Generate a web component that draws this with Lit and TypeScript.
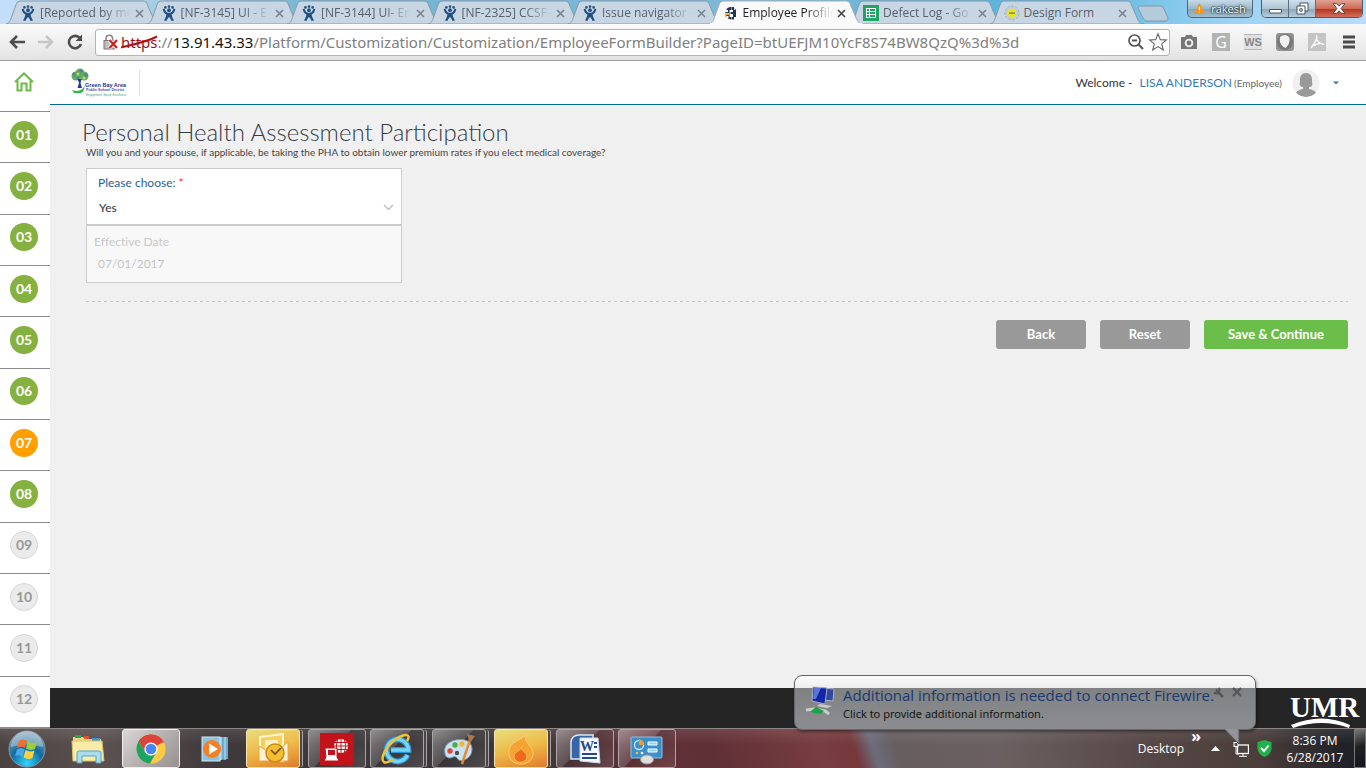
import { LitElement, html, svg, css } from "lit";
import { customElement, property } from "lit/decorators.js";
import { classMap } from "lit/directives/class-map.js";

const favicons: Record<string, unknown> = {
  jira: svg`<g fill="#205081"><circle cx="8" cy="1.6" r="1.3"/><circle cx="4.4" cy="2.4" r="1.3"/><circle cx="11.6" cy="2.4" r="1.3"/><circle cx="8" cy="5.2" r="1.9"/><path d="M1.6 4.2 3.4 3.4C4.4 6.6 6 7.8 8 7.8S11.6 6.6 12.6 3.4L14.4 4.2C13.6 7 12.3 8.7 10.6 9.6 10.8 11.8 11.8 13.8 13 15.4L10.6 16C10 14.4 9 12.8 8 12 7 12.8 6 14.4 5.4 16L3 15.4C4.2 13.8 5.2 11.8 5.4 9.6 3.7 8.7 2.4 7 1.6 4.2Z"/></g>`,
  profile: svg`<path d="M7 2A6 6 0 0 0 3 5H5V7H2.300V8H6V10H3V11H5.500V13H4.500Q6 14.300 8 14.500V12H6.500V5H8V2Z" fill="#1d3658"/><path d="M2 8.500H6V10H3.500V12.500H2.500Z" fill="#f0a020"/><path d="M8.500 2H11V5H13V12H11V14.500H8.500V12H10V9H7.500V7H10V5H8.500Z" fill="#1d3658"/><path d="M11.500 3l2 2h-2Z" fill="#49a88a"/>`,
  sheet: svg`<rect width="16" height="16" fill="#21a366"/><rect x="3" y="3" width="10" height="10" fill="#fff"/><path d="M4 4h2v2H4ZM7 4h5v2H7ZM4 7h2v2H4ZM7 7h5v2H7ZM4 10h2v2H4ZM7 10h5v2H7Z" fill="#21a366"/>`,
  design: svg`<circle cx="8" cy="8" r="7" fill="none" stroke="#a6aeb4" stroke-dasharray="3 1"/><circle cx="8" cy="8" r="5.4" fill="none" stroke="#c4c8b0"/><circle cx="8" cy="8" r="4.2" fill="#e6e41c"/><path d="M5 7.3h6v1.6H5Z" fill="#8d8a49"/>`,
};

interface TabInfo { title: string; icon: string; active?: boolean }
const tabs: TabInfo[] = [
  { title: "[Reported by me", icon: "jira" },
  { title: "[NF-3145] UI - E", icon: "jira" },
  { title: "[NF-3144] UI- Er", icon: "jira" },
  { title: "[NF-2325] CCSF-", icon: "jira" },
  { title: "Issue navigator -", icon: "jira" },
  { title: "Employee Profile", icon: "profile", active: true },
  { title: "Defect Log - Go", icon: "sheet" },
  { title: "Design Form", icon: "design" },
];

@customElement("browser-tab")
class BrowserTab extends LitElement {
  @property({ attribute: false }) info!: TabInfo;
  static styles = css`
    :host { display: block; flex: 1; min-width: 0; height: 24px; position: relative; }
    .shape { position: absolute; left: 0; top: 0; width: calc(100% + 14px); height: 24px; }
    .tab { position: relative; display: flex; align-items: center; box-sizing: border-box; height: 24px; width: 100%; padding: 2px 3px 0 14px; gap: 4px;
      border: 0; background: none; color: #56616c; font: 12px/20px "Open Sans", sans-serif; text-align: left; }
    .active { color: #222; }
    .icon { width: 16px; height: 16px; flex: none; }
    .title { flex: 1; min-width: 0; overflow: hidden; white-space: nowrap; mask-image: linear-gradient(90deg, #000 70%, transparent); }
    .full { mask-image: none; }
    .close { width: 9px; height: 9px; flex: none; }
  `;
  render() {
    const a = !!this.info.active;
    return html`
      <svg class="shape" viewBox="0 0 155 24" preserveAspectRatio="none">
        <path d="M0 24C4 23 4 21 6 16L10 5C11 2 12 1 15 1H137C140 1 141 2 142 5L148 19C150 23 151 24 155 24Z" fill=${a ? "#fafafa" : "#c8d6e3"} stroke=${a ? "#a4afb8" : "#8799a9"}></path>
        ${a ? svg`<path d="M1 24H154" stroke="#fafafa" stroke-width="2"/>` : ""}
      </svg>
      <button class=${classMap({ tab: true, active: a })}>
        <svg class="icon" viewBox="0 0 16 16">${favicons[this.info.icon]}</svg>
        <span class=${classMap({ title: true, full: this.info.icon === "design" })}>${this.info.title}</span>
        <svg class="close" viewBox="0 0 9 9"><path d="M1 1 8 8M8 1 1 8" stroke=${a ? "#444" : "#78828c"} stroke-width="1.6"/></svg>
      </button>`;
  }
}

@customElement("browser-chrome")
class BrowserChrome extends LitElement {
  static styles = css`
    :host { display: block; font-family: "Open Sans", sans-serif; }
    .strip { display: flex; align-items: flex-start; height: 24px; padding-left: 6px; background: linear-gradient(90deg, #c3defa 0, #abcfe8 10%, #72b4d1 24%, #7db9d8 55%, #68b4d8 66%, #58b4dc 78%, #9dd2f2 90%, #b9dcfa); }
    .tabs { display: flex; flex: 0 1 1124px; min-width: 0; }
    .on { z-index: 1; }
    .newtab { width: 32px; height: 17px; margin: 5px 0 0 7px; padding: 0; border: 0; background: none; }
    .newtab svg { display: block; }
    .grow { flex: 1; }
    .user { display: flex; align-items: center; justify-content: center; gap: 6px; height: 18px; width: 66px; padding: 0; margin-right: 8px; border: 1px solid #526779; border-top: 0; border-radius: 0 0 5px 5px; background: linear-gradient(#c7dbe9, #9db6c7 50%, #86a2b6 51%, #a2bccd); color: #fff; font: 11px/14px "Open Sans", sans-serif; text-shadow: 0 0 2px #000, 0 0 2px #000; }
    .win { display: flex; margin-right: 3px; border: 1px solid #4c5a68; border-top: 0; border-radius: 0 0 5px 5px; overflow: hidden; }
    .win button { display: grid; place-items: center; height: 17px; width: 27px; padding: 0; border: 0; border-right: 1px solid #5d6f7e; background: linear-gradient(#d0e0ec, #afc4d4 50%, #8ca5b8 51%, #b7cddc); }
    .win .shut { width: 46px; border: 0; background: linear-gradient(#e0a193, #cf6a55 50%, #b5301b 51%, #d1705a); }
    .bar { display: flex; align-items: center; height: 36px; border-bottom: 1px solid #a0a0a0; background: linear-gradient(#fafafa, #e3e3e3); padding: 0 7px 0 8px; }
    .nav { width: 18px; height: 18px; padding: 0; border: 0; background: none; margin-right: 11px; }
    .nav svg, .ext svg, .omni svg { display: block; }
    .omni { display: flex; align-items: center; flex: 1; min-width: 0; height: 25px; border: 1px solid #b4b4b4; border-radius: 3px; background: #fff; padding: 0 1px 0 7px; }
    .url { position: relative; flex: 1; min-width: 0; margin-left: 3px; }
    .address { display: block; white-space: nowrap; overflow: hidden; font: 15px/24px "Noto Sans", sans-serif; color: #808080; }
    .bad { color: #a01216; position: relative; }
    .strike { position: absolute; left: 0; top: 5px; width: 37px; height: 14px; }
    .host { color: #111; }
    .tool { width: 20px; height: 20px; padding: 0; border: 0; background: none; margin-left: 2px; }
    .ext { display: flex; align-items: center; gap: 12px; padding-left: 9px; }
    .ext button { width: 20px; height: 20px; padding: 0; border: 0; background: none; }
  `;
  render() {
    return html`
      <div class="strip">
        <div class="tabs">${tabs.map((t) => html`<browser-tab class=${t.active ? "on" : ""} .info=${t}></browser-tab>`)}</div>
        <button class="newtab" aria-label="New tab"><svg width="32" height="17" viewBox="0 0 32 17"><path d="M1 3C1 1 2 1 4 1H23C25 1 26 2 27 4L31 13C31 15 30 16 28 16H10C8 16 7 15 6 13Z" fill="#b4cbdc" stroke="#8298a8"/></svg></button>
        <span class="grow"></span>
        <button class="user"><svg width="11" height="11" viewBox="0 0 11 11"><path d="M5.5 0 11 11H0Z" fill="#f6960f"/><path d="M5.5 4v3.4M5.5 8.4v1.2" stroke="#fff" stroke-width="1.2"/></svg>rakesh</button>
        <div class="win">
          <button aria-label="Minimize"><svg width="13" height="11" viewBox="0 0 13 11"><rect x=".5" y="6.5" width="12" height="3.5" rx=".5" fill="#fff" stroke="#47525e"/></svg></button>
          <button aria-label="Restore"><svg width="13" height="13" viewBox="0 0 13 13"><path d="M4 1H12V9H9V12H1V4H4Z" fill="#fff" stroke="#47525e"/><path d="M4 4H9V9M3.8 6.8h2.4v2.4H3.8Z" fill="none" stroke="#47525e"/></svg></button>
          <button class="shut" aria-label="Close"><svg width="14" height="11" viewBox="0 0 14 11"><path d="M1 .7H4.5L7 3.2 9.5.7H13L9 5.5 13 10.3H9.5L7 7.8 4.5 10.3H1L5 5.5Z" fill="#fff" stroke="#4d3a3e" stroke-width=".9"/></svg></button>
        </div>
      </div>
      <div class="bar">
        <button class="nav" aria-label="Back"><svg width="18" height="18" viewBox="0 0 18 18"><path d="M17 9H4M9 3 3 9 9 15" fill="none" stroke="#4d4d4d" stroke-width="2.6"/></svg></button>
        <button class="nav" aria-label="Forward"><svg width="18" height="18" viewBox="0 0 18 18"><path d="M1 9H14M9 3 15 9 9 15" fill="none" stroke="#c6c6c6" stroke-width="2.6"/></svg></button>
        <button class="nav" aria-label="Reload"><svg width="18" height="18" viewBox="0 0 18 18"><path d="M14 5.2A6.2 6.2 0 1 0 15 11" fill="none" stroke="#4d4d4d" stroke-width="2.6"/><path d="M16 1.5V8H9.5Z" fill="#4d4d4d"/></svg></button>
        <div class="omni">
          <svg width="15" height="16" viewBox="0 0 15 16"><path d="M3 7V4.5a3.3 3.3 0 0 1 6.6 0V7" fill="none" stroke="#8b8b8b" stroke-width="1.6"/><rect x="1" y="6.5" width="10.5" height="8.5" fill="#bdbdbd" stroke="#777"/><path d="M6.2 6 14 14M14 6 6.2 14" stroke="#fff" stroke-width="4"/><path d="M6.5 6 14 14M14 6 6.5 14" stroke="#cf1f1b" stroke-width="2.2"/></svg>
          <div class="url">
            <span class="address"><span class="bad">https</span>://<span class="host">13.91.43.33</span>/Platform/Customization/Customization/EmployeeFormBuilder?PageID=btUEFJM10YcF8S74BW8QzQ%3d%3d</span>
            <svg class="strike" viewBox="0 0 37 14"><path d="M0 12.5C10 10 26 7 36 1.5" stroke="#b01015" stroke-width="2" fill="none"/></svg>
          </div>
          <button class="tool" aria-label="Zoom"><svg width="20" height="20" viewBox="0 0 20 20"><circle cx="8.5" cy="8.5" r="5.5" fill="none" stroke="#555" stroke-width="1.7"/><path d="M6 8.5h5M12.5 12.5 17 17" stroke="#555" stroke-width="2"/></svg></button>
          <button class="tool" aria-label="Bookmark"><svg width="20" height="20" viewBox="0 0 20 20"><path d="M10 1.8 12.3 7.6 18.4 8 13.7 11.9 15.3 18 10 14.6 4.7 18 6.3 11.9 1.6 8 7.7 7.6Z" fill="#fff" stroke="#666" stroke-width="1.1"/></svg></button>
        </div>
        <div class="ext">
          <button aria-label="Screenshot"><svg width="20" height="20" viewBox="0 0 20 20"><path d="M2 5H6L7 3H13L14 5H18V17H2Z" fill="#777"/><circle cx="10" cy="11" r="4.3" fill="#eee"/><circle cx="10" cy="11" r="2.4" fill="#777"/></svg></button>
          <button aria-label="G"><svg width="20" height="20" viewBox="0 0 20 20"><rect x="1" y="1" width="18" height="18" fill="#b3b3b3"/><text x="10" y="16" text-anchor="middle" font-family="Open Sans" font-size="16" fill="#fff">G</text></svg></button>
          <button aria-label="WS"><svg width="20" height="20" viewBox="0 0 20 20"><rect x="1" y="2" width="18" height="15" fill="#e0e0e0"/><path d="M1 2.5H19M1 17.5H19" stroke="#b8b8b8"/><text x="10" y="14" text-anchor="middle" font-family="Liberation Sans" font-weight="bold" font-size="11" fill="#888">WS</text></svg></button>
          <button aria-label="Shield"><svg width="20" height="20" viewBox="0 0 20 20"><rect x="1" y="1" width="18" height="18" rx="3" fill="#929292"/><circle cx="10" cy="10" r="8" fill="#777"/><path d="M5 5Q10 1 14.5 5.5C15 11 13 14 10.5 16 6 14 4 10 5 5Z" fill="#f0f0f0"/></svg></button>
          <button aria-label="PDF"><svg width="20" height="20" viewBox="0 0 20 20"><rect x="1" y="1" width="18" height="18" fill="#c4c4c4"/><path d="M9 4C11 3 10 9 4 16M9.5 4C9 9 13 12 17 12.5C14 10.5 8 12 4 15" fill="none" stroke="#fff" stroke-width="1.3"/></svg></button>
          <button aria-label="Menu"><svg width="20" height="20" viewBox="0 0 20 20"><path d="M4 5H16M4 10H16M4 15H16" stroke="#4a4a4a" stroke-width="2.8"/></svg></button>
        </div>
      </div>`;
  }
}

@customElement("desktop-taskbar")
class DesktopTaskbar extends LitElement {
  static styles = css`
    :host { display: flex; align-items: stretch; height: 40px; box-sizing: border-box; border-top: 1px solid #8c8785;
      background: linear-gradient(180deg, #ffffff18, #0000 40%), linear-gradient(72deg, #4b4140 0, #5b5150 8%, #40393b 16%, #3b373a 38%, #603238 47%, #5f3036 52%, #783d41 60%, #75383b 62.4%, #6d6c7b 63.8%, #675e60 65.4%, #6b5f60 73%, #544745 84%, #493c39 92%, #202229 98%);
      color: #fff; font: 12px/17px "Open Sans", sans-serif; }
    .apps { display: flex; align-items: stretch; flex: 1; }
    button { padding: 0; border: 0; background: none; color: inherit; font: inherit; display: grid; place-items: center; }
    svg { display: block; }
    .start { width: 54px; }
    .plain { width: 62px; }
    .first { width: 68px; }
    .task { box-sizing: border-box; border: 1px solid #a9a6a7; border-radius: 3px; background: linear-gradient(135deg, #ffffff60, #ffffff20 45%, #00000010 46%, #ffffff18); margin-right: 4px; width: 58px; }
    .task.stack { width: 54px; margin-right: 8px; box-shadow: 3px 0 0 -1px #4a4546, 4px 0 0 -1px #a9a6a7; }
    .task.hot { background: linear-gradient(165deg, #e9dd7c, #eeb948 50%, #e07a2c); border-color: #f5e7b4; }
    .task.lit { background: linear-gradient(135deg, #dad7d6, #b5b1b1 50%, #96908f); border-color: #eee; }
    .tray { display: flex; align-items: center; }
    .desk { margin-right: 7px; }
    .more { align-self: flex-start; font: bold 16px/14px "Open Sans", sans-serif; margin-right: 10px; }
    .icons { display: flex; align-items: center; gap: 8px; margin-right: 8px; }
    .up { margin-right: 5px; }
    .clock { width: 70px; text-align: center; display: block; margin-right: 4px; white-space: nowrap; }
    .peek { width: 12px; align-self: stretch; border: 1px solid #777; background: linear-gradient(160deg, #777, #1e2026 45%, #15171c); }
  `;
  render() {
    return html`
      <div class="apps">
        <button class="start" aria-label="Start"><svg width="38" height="38" viewBox="0 0 38 38"><defs><radialGradient id="orb" cy=".9" r=".9"><stop stop-color="#30d7ff"/><stop offset=".5" stop-color="#126aa2"/><stop offset="1" stop-color="#8fa9b9"/></radialGradient></defs><circle cx="19" cy="19" r="18" fill="url(#orb)" stroke="#8797a1"/><path d="M3 17A16 16 0 0 1 35 17Q18 12 3 17" fill="#fff5"/><path d="M11 11Q15 8 19 11L17 18Q13 15.500 9 18Z" fill="#f26d2e"/><path d="M20 11.500Q24 14 29 12L27 19Q22 21 18 18.500Z" fill="#9bcf3a"/><path d="M9 19.500Q13 17 16.500 19.500L14.500 27Q11 24 7 26Z" fill="#49a9e6"/><path d="M17.500 20Q22 22.500 26.500 20.500L24.500 28Q20 30 15.500 27.500Z" fill="#ffd23c"/></svg></button>
        <button class="first" aria-label="Explorer"><svg width="34" height="32" viewBox="0 0 34 32"><path d="M2 4H12L14 6H30V26H2Z" fill="#e9d684"/><path d="M4 2H10V5H4Z" fill="#28a745"/><path d="M13 3H18V6H13Z" fill="#e05334"/><path d="M21 5H29V8H21Z" fill="#3c94d6"/><path d="M1 8H31L33 28H2Z" fill="#f8eca8" stroke="#d8c46a"/><path d="M6 30V20Q6 18 8 18H28Q30 18 30 20V30H25V23H11V30Z" fill="#a9dcf0" stroke="#5aa4c7"/></svg></button>
        <button class="task lit" aria-label="Chrome"><svg width="30" height="30" viewBox="0 0 30 30"><circle cx="15" cy="15" r="14.500" fill="#fc4"/><path d="M15 15 2.400 7.800A14.500 14.500 0 0 1 27.600 7.800Z" fill="#db4437"/><path d="M15 8.500H28L27.400 7.400A14.500 14.500 0 0 0 2.500 7.600L9.400 18Z" fill="#db4437"/><path d="M2.500 7.600A14.500 14.500 0 0 0 14 29.500L20.600 18 15 21.500 9.400 18Z" fill="#1da462"/><circle cx="15" cy="15" r="6.600" fill="#fff"/><circle cx="15" cy="15" r="5.300" fill="#4687f4"/></svg></button>
        <button class="plain" aria-label="Media player"><svg width="28" height="28" viewBox="0 0 28 28"><path d="M13 2H27V24L13 26Z" fill="#6cadcf"/><path d="M20 2V25M24 2V25" stroke="#bce4f4"/><rect x="1" y="2" width="18" height="24" fill="#8dc3df" stroke="#d1eaf5"/><circle cx="11" cy="14" r="9" fill="#f47f25"/><path d="M8 8.500 17 14 8 19.500Z" fill="#fff"/></svg></button>
        <button class="task hot stack" aria-label="Outlook"><svg width="32" height="32" viewBox="0 0 32 32"><path d="M3 4 26 1V28L3 25Z" fill="#f7cf5a" stroke="#fff7cf" stroke-width="2"/><path d="M8 7H21V13L15 19H8Z" fill="#fff2be"/><path d="M2 13 16 22 31 9V28H2Z" fill="#fff1d5" stroke="#e5a640"/><circle cx="18" cy="20" r="9" fill="#f3be36" stroke="#c98a12" stroke-width="1.500"/><path d="M14 17 18 21 24 15" fill="none" stroke="#7b4d0a" stroke-width="1.600"/></svg></button>
        <button class="task" aria-label="Remote network"><svg width="34" height="32" viewBox="0 0 34 32"><rect width="34" height="32" fill="#c2121a"/><circle cx="21" cy="13" r="7" fill="#fff"/><path d="M14 13H28M21 6V20M15 9.500H27M15 16.500H27M17.500 7Q15 13 17.500 19M24.500 7Q27 13 24.500 19" stroke="#c2121a" fill="none"/><path d="M5 15H17V24L19 28H4L6 24Z" fill="#fff" stroke="#c2121a"/><rect x="8" y="17" width="7" height="5" fill="#c2121a"/></svg></button>
        <button class="task stack" aria-label="Internet Explorer"><svg width="32" height="32" viewBox="0 0 32 32"><path d="M26.500 22A11 11 0 1 1 27.500 17H10" fill="none" stroke="#2f93d4" stroke-width="6"/><path d="M26.500 22A11 11 0 1 1 27.500 17H10" fill="none" stroke="#75d4f7" stroke-width="3.500"/><path d="M26 8C31 0 23 1 15 6 4 14-1 26 3 29 5 31 9 28 12 26" fill="none" stroke="#f3c42c" stroke-width="2.500"/></svg></button>
        <button class="task stack" aria-label="Paint"><svg width="34" height="32" viewBox="0 0 34 32"><path d="M3 21C0 9 14 5 23 7 33 10 32 24 22 27 14 30 17 22 11 24 7 26 4 25 3 21Z" fill="#c8e2f2" stroke="#7499b7"/><circle cx="8" cy="18" r="2.700" fill="#de4937"/><circle cx="13" cy="12" r="2.700" fill="#55a93f"/><circle cx="20" cy="11" r="2.700" fill="#f2b731"/><circle cx="15" cy="20" r="2.200" fill="#534d55"/><path d="M29 4 20 31" stroke="#e68a34" stroke-width="2.500"/><path d="M25 1 33 3 28 10Z" fill="#a47750"/></svg></button>
        <button class="task hot stack" aria-label="Flame"><svg width="28" height="34" viewBox="0 0 28 34"><path d="M21 1C13 10 27 13 26 23 24 35 4 35 2 23 0 9 15 9 21 1Z" fill="#f5a434" stroke="#ffcd70"/><path d="M15 14C12 19 20 19 20 25 19 32 8 32 7 25 7 19 14 20 15 14Z" fill="#ee6a1c" stroke="#ffb752"/></svg></button>
        <button class="task" aria-label="Word"><svg width="32" height="32" viewBox="0 0 32 32"><path d="M2 9Q3 2 10 2H24V26H2Z" fill="#3665a9" stroke="#d7e6f5" stroke-width="1.500"/><path d="M11 5H29L31 30 11 28Z" fill="#f5f8fd" stroke="#ccd8e9"/><text x="11" y="18" font-family="Liberation Serif" font-weight="bold" font-size="14" fill="#244886">W</text><path d="M25 10H28M25 14H28M13 21H28M13 25H28" stroke="#244886" stroke-width="2"/></svg></button>
        <button class="task" aria-label="Control panel"><svg width="34" height="32" viewBox="0 0 34 32"><rect x="1" y="4" width="31" height="21" rx="1" fill="#3d8fca" stroke="#8cc3e6"/><circle cx="9" cy="12" r="4.500" fill="none" stroke="#c9e9fa" stroke-width="1.300"/><path d="M9 12V6A6 6 0 0 1 14 12Z" fill="#f49a2c"/><path d="M18 9H27V12H18ZM18 16H27V19H18Z" fill="#8ed5f5" stroke="#fff"/><circle cx="7" cy="20" r="1.300" fill="#f8b745"/><circle cx="12" cy="20" r="1.300" fill="#fff"/><ellipse cx="17" cy="26.500" rx="6.500" ry="4.500" fill="#dedede" stroke="#999"/></svg></button>
      </div>
      <div class="tray">
        <span class="desk">Desktop</span>
        <span class="more">»</span>
        <div class="icons">
          <svg class="up" width="9" height="6" viewBox="0 0 9 6"><path d="M4.500 0 9 5H0Z" fill="#fff"/></svg>
          <svg width="16" height="16" viewBox="0 0 16 16"><rect x="4.500" y="4" width="11" height="8.500" fill="#4a4240" stroke="#fff" stroke-width="1.300"/><path d="M10 13V15M6 15.300H14M3 6V13H6" fill="none" stroke="#fff"/><rect x="1" y="1.500" width="4" height="4" fill="#555" stroke="#fff"/></svg>
          <svg width="15" height="17" viewBox="0 0 15 17"><path d="M7.500 0 14.500 2V9Q14 14 7.500 17 1 14 .5 9V2Z" fill="#22b04c"/><path d="M4 8 7 11 11.500 5.500" fill="none" stroke="#fff" stroke-width="1.900"/></svg>
        </div>
        <button class="clock"><div>8:36 PM</div><div>6/28/2017</div></button>
        <button class="peek" aria-label="Show desktop"></button>
      </div>`;
  }
}

@customElement("app-root")
class AppRoot extends LitElement {
  static styles = css`
    :host { display: flex; flex-direction: column; height: 100vh; overflow: hidden; font-family: Lato, sans-serif; font-variant-ligatures: none; color: #333; position: relative; }
    .page { display: flex; flex: 1; min-height: 0; background: #fff; }
    .side { display: flex; flex-direction: column; flex: none; width: 50px; }
    .home { display: grid; place-items: center; height: 51px; box-sizing: border-box; padding: 0 2px 9px 0; border-bottom: 1px solid #8c8c8c; }
    .home svg { display: block; }
    .steps { display: flex; flex-direction: column; flex: 1; margin: 0; padding: 0; list-style: none; }
    .step { flex: 1; box-sizing: border-box; border-bottom: 1px solid #8c8c8c; padding: 0 2px 5px 0; display: grid; place-items: center; }
    .dot { width: 28px; height: 28px; box-sizing: border-box; border-radius: 50%; background: #84b140; color: #fff; font: bold 14px/28px Lato, sans-serif; text-align: center; text-decoration: none; }
    .now { background: #ffa000; }
    .todo { background: #ebebeb; color: #999; border: 1px solid #d6d6d6; line-height: 26px; }
    .body { display: flex; flex-direction: column; flex: 1; min-width: 0; }
    .head { display: flex; align-items: center; height: 43px; border-bottom: 1px solid #006a9c; padding: 0 26px 0 20px; font-size: 12px; flex: none; }
    .logo { width: 60px; height: 30px; }
    .rule { width: 1px; height: 26px; background: #ddd; margin-left: 9px; }
    .grow { flex: 1; }
    .name { color: #337ab7; text-decoration: none; margin: 0 2px 0 7px; }
    .role { font-size: 10px; color: #666; margin-right: 10px; }
    .avatar { width: 28px; height: 28px; margin-right: 12px; }
    .menu { padding: 0; border: 0; background: none; width: 8px; height: 16px; display: grid; place-items: center; }
    .main { flex: 1; background: #f0f0f0; padding: 12px 18px 0 36px; min-height: 0; }
    h1 { margin: 0 0 0 -4px; font: 300 24px/30px Lato, sans-serif; color: #333b47; }
    .lead { margin: 0 0 10px; font-size: 10px; line-height: 11px; color: #444; }
    .fields { width: 316px; max-width: 100%; }
    .field { box-sizing: border-box; height: 57px; border: 1px solid #ccc; background: #fff; padding: 6px 6px 0 11px; font-size: 12px; line-height: 16px; }
    .field label { display: block; color: #1f6292; }
    .req { color: #f22; }
    .pick { position: relative; margin-top: 8px; }
    select { appearance: none; display: block; width: 100%; border: 0; padding: 0 0 0 1px; margin: 0; background: none; font: 12px/18px Lato, sans-serif; color: #333; height: 18px; }
    .chev { position: absolute; right: 1px; top: 5px; pointer-events: none; }
    .off { background: #f8f8f8; height: 58px; padding: 8px 6px 0 7px; }
    .off label { color: #c8c8c8; }
    .off input { display: block; width: 100%; box-sizing: border-box; border: 0; padding: 0 0 0 4px; margin-top: 5px; height: 18px; background: none; color: #c4c4c4; font: 12px/18px Lato, sans-serif; }
    .dash { height: 1px; margin: 18px 0 18px; background: repeating-linear-gradient(90deg, #c6c6c6 0 3px, transparent 3px 6px); }
    .actions { display: flex; justify-content: flex-end; gap: 14px; }
    .btn { width: 90px; height: 29px; border: 0; border-radius: 3px; padding: 0; background: #999; color: #fff; font: bold 13px/29px Lato, sans-serif; }
    .save { width: 144px; background: #6cbe4a; }
    .foot { flex: none; height: 40px; background: #252525; display: flex; justify-content: flex-end; align-items: flex-start; padding: 0 6px 0 0; }
    .toast { position: absolute; right: 110px; bottom: 38px; box-sizing: border-box; width: 462px; height: 55px; border: 1px solid #666; border-radius: 8px; background: linear-gradient(#fbfbfb, #eee 12px, #808183 12px, #8b8d90); display: flex; padding: 9px 13px 0 10px; gap: 4px; box-shadow: 1px 2px 3px #0006; font-family: "Open Sans", sans-serif; }
    .pc { width: 34px; height: 34px; flex: none; }
    .note { flex: 1; min-width: 0; white-space: nowrap; }
    .note strong { display: block; font: 15px/21px "Open Sans", sans-serif; color: #193a72; }
    .note span { display: block; font: 11px/16px "Noto Sans", sans-serif; color: #151515; }
    .ctl { display: flex; gap: 8px; margin-top: 1px; }
    .ctl button { padding: 0; border: 0; background: none; height: 12px; }
    .ctl svg { display: block; }
    .tip { position: absolute; right: 15px; top: 53px; }
  `;
  render() {
    const steps = Array.from({ length: 12 }, (_, i) => i + 1);
    return html`
      <browser-chrome></browser-chrome>
      <div class="page">
        <nav class="side">
          <a class="home" href="#" aria-label="Home"><svg width="20" height="20" viewBox="0 0 20 20"><path d="M1 10 10 1.500 19 10M3.500 8.500V18.500H7.500V11.500H12.500V18.500H16.500V8.500" fill="none" stroke="#6cbb45" stroke-width="2"/></svg></a>
          <ol class="steps">${steps.map((n) => html`<li class="step"><a href="#" class=${classMap({ dot: true, now: n === 7, todo: n > 8 })}>${String(n).padStart(2, "0")}</a></li>`)}</ol>
        </nav>
        <div class="body">
          <header class="head">
            <svg class="logo" viewBox="0 0 60 30"><g fill="#67a855"><circle cx="6" cy="8" r="4.500"/><circle cx="14" cy="8" r="4.500"/><circle cx="10" cy="5" r="4.500"/></g><g fill="#3f86b0"><circle cx="4" cy="6" r="1.600"/><circle cx="11" cy="3" r="1.600"/><circle cx="16" cy="7" r="1.700"/><circle cx="8" cy="10" r="1.600"/></g><g fill="#b4d97a"><circle cx="8" cy="6" r="1.500"/><circle cx="14" cy="10" r="1.500"/></g><path d="M7.500 11H11.500L10.500 15 12 20H7.500L9 15Z" fill="#2a3a8c"/><path d="M2 22Q11 25 14.500 18 15 27 4 25Z" fill="#35b44a"/><text x="15" y="18.500" font-family="Liberation Sans" font-weight="bold" font-size="5.500" fill="#2d3480">Green Bay Area</text><text x="16" y="23" font-family="Liberation Sans" font-weight="bold" font-size="3.700" fill="#4a4b9a">Public School District</text><text x="16" y="27.500" font-family="Liberation Sans" font-size="2.800" fill="#449a83">Engagement. Equity. Excellence.</text></svg>
            <span class="rule"></span>
            <span class="grow"></span>
            <span>Welcome -</span><a class="name" href="#">LISA ANDERSON</a><span class="role">(Employee)</span>
            <svg class="avatar" viewBox="0 0 28 28"><circle cx="14" cy="14" r="13.500" fill="#f0f0f0"/><path d="M14 4C19 4 20.500 8 20 13 21 16 20 18 17 18V20Q22 21 24 23.500A13.500 13.500 0 0 1 4 23.500Q6 21 11 20V18C8 18 7 16 8 13 7.500 8 9 4 14 4Z" fill="#999"/></svg>
            <button class="menu" aria-label="Account menu"><svg width="6" height="4" viewBox="0 0 6 4"><path d="M0 .5H6L3 3.500Z" fill="#337ab7"/></svg></button>
          </header>
          <main class="main">
            <h1>Personal Health Assessment Participation</h1>
            <p class="lead">Will you and your spouse, if applicable, be taking the PHA to obtain lower premium rates if you elect medical coverage?</p>
            <div class="fields">
              <div class="field">
                <label for="choice">Please choose: <span class="req">*</span></label>
                <div class="pick"><select id="choice"><option>Yes</option><option>No</option></select>
                  <svg class="chev" width="11" height="7" viewBox="0 0 11 7"><path d="M1 1 5.500 5.500 10 1" fill="none" stroke="#b8b8b8" stroke-width="1.200"/></svg></div>
              </div>
              <div class="field off">
                <label for="date">Effective Date</label>
                <input id="date" value="07/01/2017" disabled />
              </div>
            </div>
            <div class="dash"></div>
            <div class="actions">
              <button class="btn">Back</button><button class="btn">Reset</button><button class="btn save">Save &amp; Continue</button>
            </div>
          </main>
          <footer class="foot"><svg width="70" height="40" viewBox="0 0 70 40"><text x="0" y="29" font-family="Liberation Serif" font-weight="bold" font-size="29" fill="#fff">UMR</text><path d="M1 37Q32 24 60 37L59 40Q32 30 3 40Z" fill="#fff"/></svg></footer>
        </div>
      </div>
      <desktop-taskbar></desktop-taskbar>
      <aside class="toast">
        <svg class="pc" viewBox="0 0 34 34"><path d="M17 3 29 4 28 16 18 15Z" fill="#3348a0" stroke="#aab3c8"/><path d="M8 2 22 3 20 19 7 16Z" fill="#1525a8" stroke="#a6b0c8"/><path d="M9 3 16 3 11 14 8 14Z" fill="#5f74d8"/><path d="M15 19 27 21 22 23 12 21Z" fill="#ccc"/><path d="M1 25 9 24 20 26 24 29" stroke="#c8cfc9" stroke-width="3" fill="none"/><path d="M6 26 11 22 19 26 16 29 8 28Z" fill="#1ea04a"/></svg>
        <div class="note"><strong>Additional information is needed to connect Firewire.</strong><span>Click to provide additional information.</span></div>
        <div class="ctl">
          <button aria-label="Options"><svg width="11" height="11" viewBox="0 0 11 11"><path d="M3 3 10 10" stroke="#555" stroke-width="2.500"/><path d="M5.500 1A3 3 0 1 1 1 5.500" fill="none" stroke="#555" stroke-width="2"/></svg></button>
          <button aria-label="Dismiss"><svg width="10" height="10" viewBox="0 0 10 10"><path d="M1 1 9 9M9 1 1 9" stroke="#555" stroke-width="2.200"/></svg></button>
        </div>
        <svg class="tip" width="15" height="15" viewBox="0 0 15 15"><path d="M0 0H14V15Z" fill="#94929a"/><path d="M0 1 14 15V0" fill="none" stroke="#555"/></svg>
      </aside>`;
  }
}
